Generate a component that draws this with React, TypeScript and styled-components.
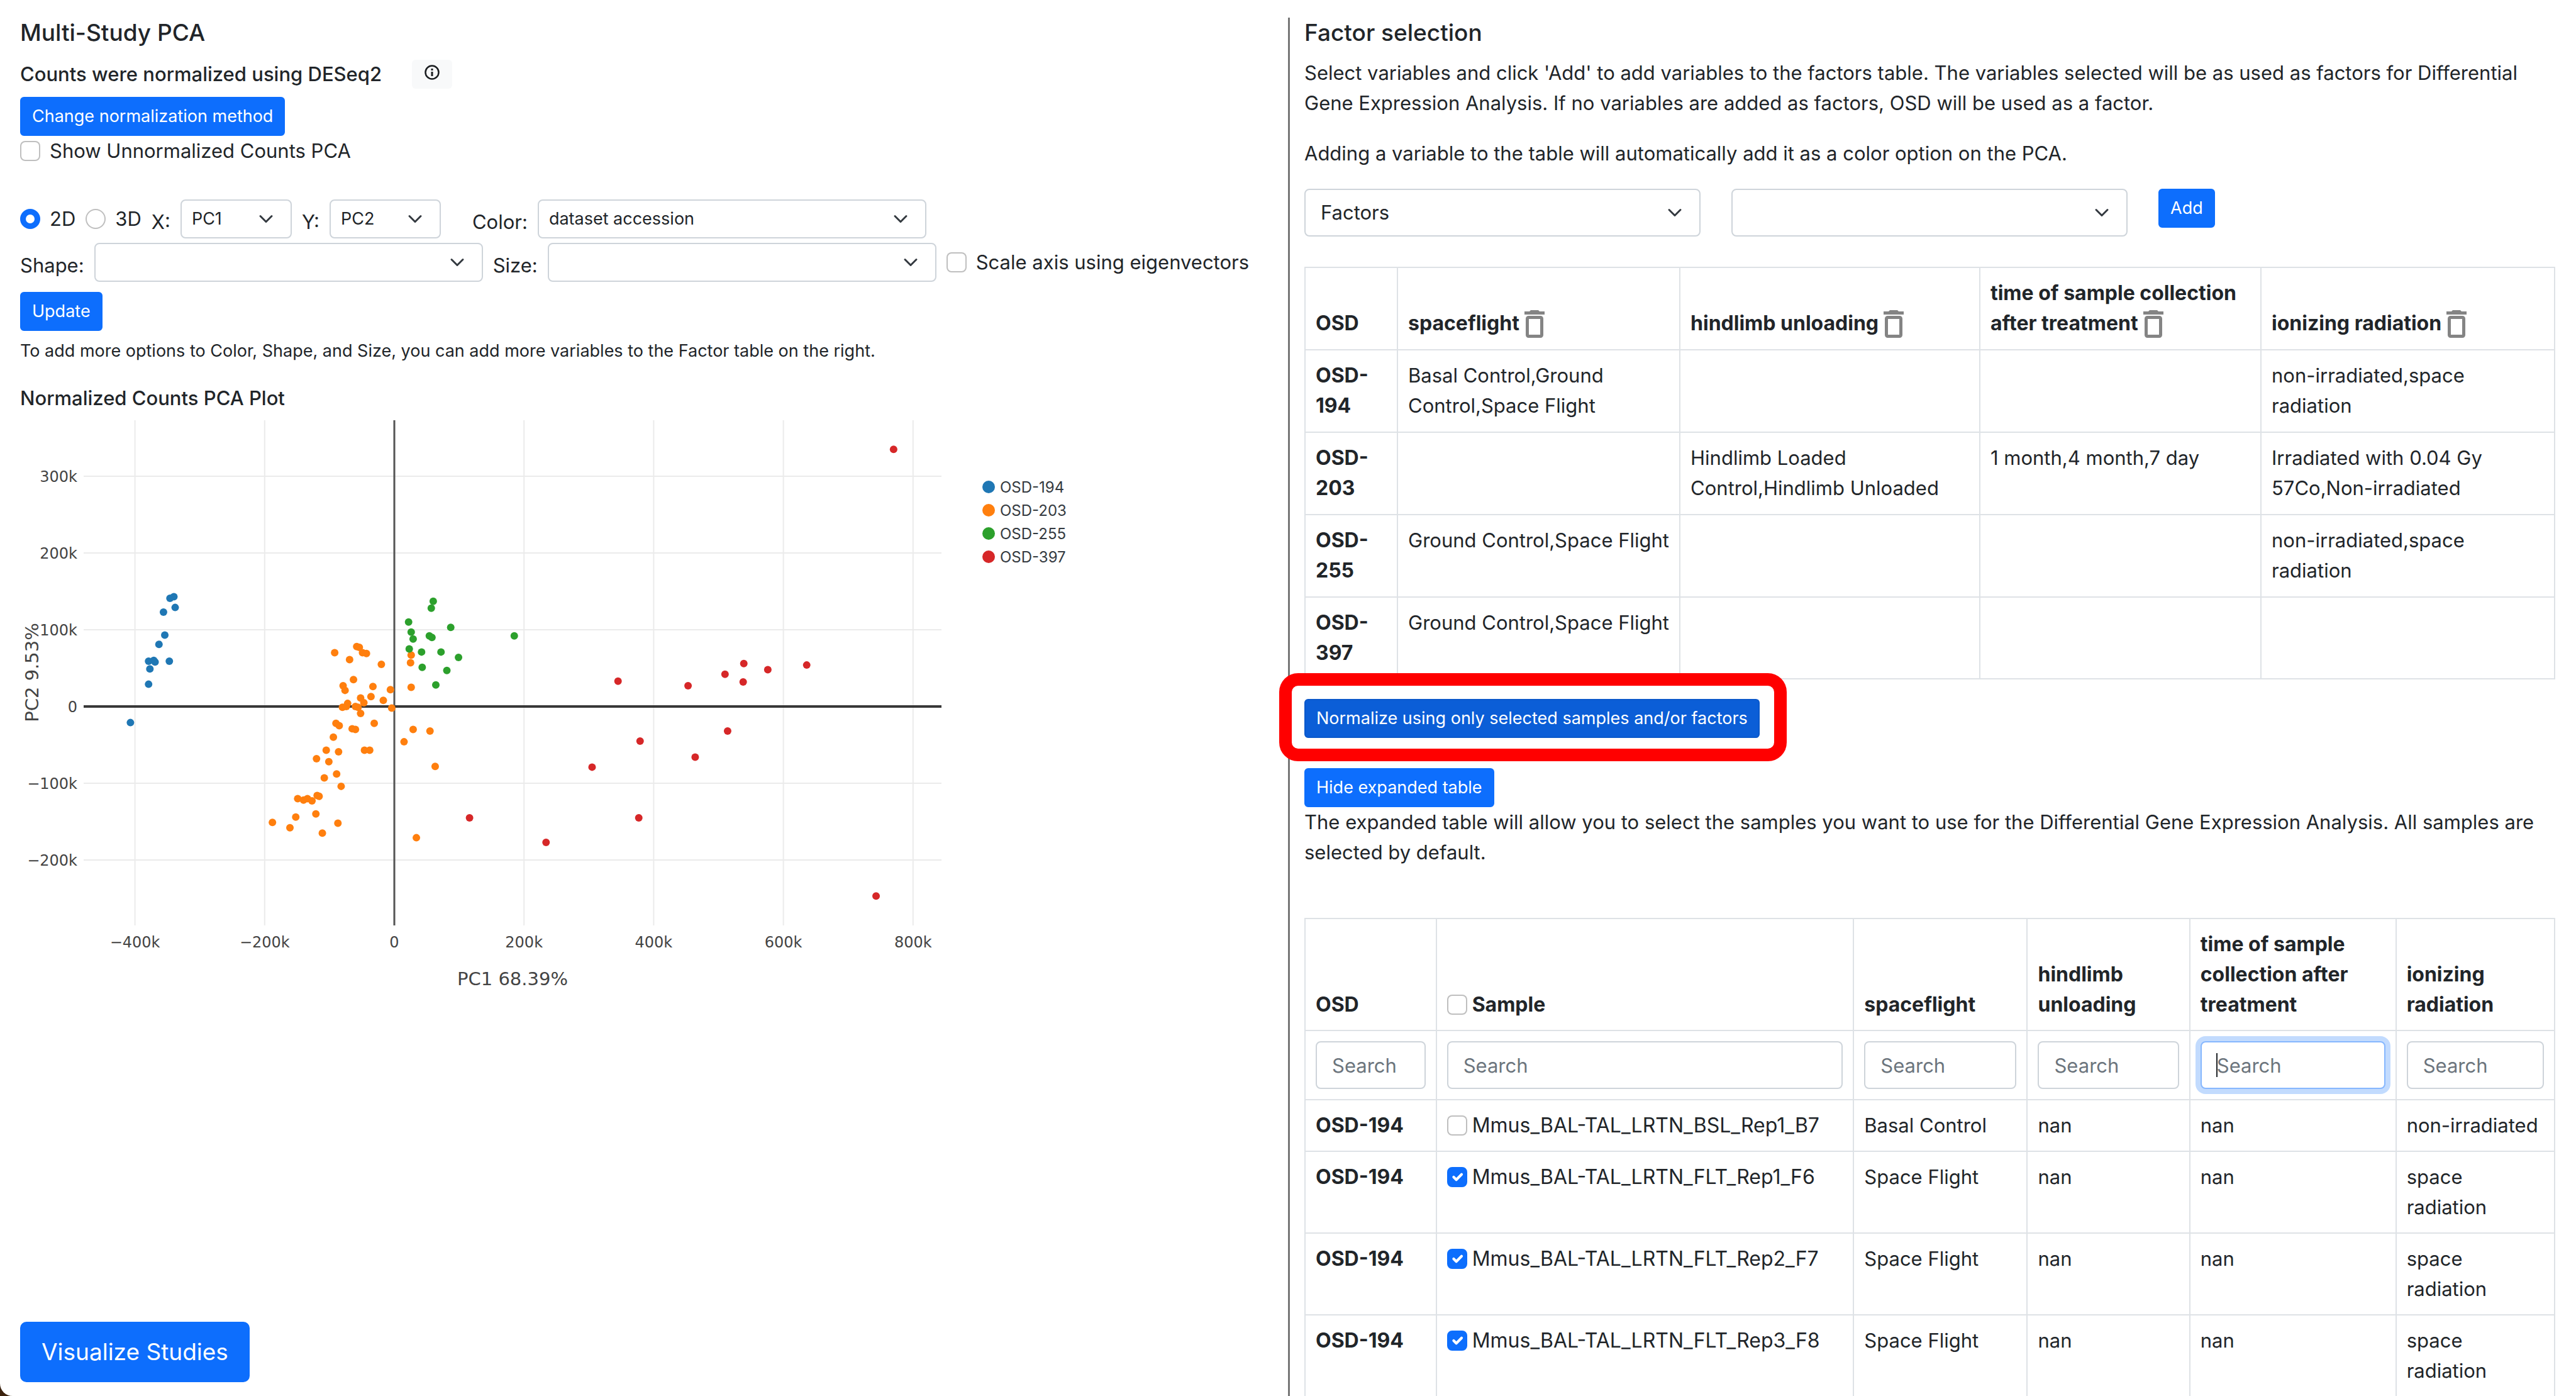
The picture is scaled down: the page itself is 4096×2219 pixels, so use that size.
import React from 'react';
import styled, { createGlobalStyle, css } from 'styled-components';

const SANS = 'Inter, "Liberation Sans", Arial, sans-serif';
const PLOT = '"DejaVu Sans", Verdana, sans-serif';

const CHECK_MARK =
  "url(\"data:image/svg+xml,%3csvg xmlns='http://www.w3.org/2000/svg' viewBox='0 0 20 20'%3e%3cpath fill='none' stroke='%23fff' stroke-linecap='round' stroke-linejoin='round' stroke-width='3' d='m6 10 3 3 6-6'/%3e%3c/svg%3e\")";
const RADIO_DOT =
  "url(\"data:image/svg+xml,%3csvg xmlns='http://www.w3.org/2000/svg' viewBox='-4 -4 8 8'%3e%3ccircle r='2' fill='%23fff'/%3e%3c/svg%3e\")";

const GlobalStyle = createGlobalStyle`
  *, *::before, *::after { box-sizing: border-box; }
  body {
    margin: 0;
    background: #3b220e;
    color: #212529;
    font-family: ${SANS};
    font-size: 31px;
    line-height: 48px;
  }
  button, input, select { font: inherit; color: inherit; margin: 0; }
`;

/* ---------- page frame ---------- */

const Page = styled.main`
  display: grid;
  grid-template-columns: minmax(0, 1fr) minmax(0, 1fr);
  height: 100vh;
  padding-top: 28px;
  overflow: hidden;
  background: #fff;
  border-bottom-left-radius: 20px;
`;

const PlotPanel = styled.section`
  display: flex;
  flex-direction: column;
  align-items: flex-start;
  min-height: 0;
  padding: 0 34px 22px 32px;
`;

const FactorPanel = styled.section`
  min-height: 0;
  padding: 0 33px 0 23px;
  border-left: 3px solid #777;
`;

const PanelTitle = styled.h1`
  margin: 0 0 16px;
  font-size: 37px;
  font-weight: 500;
  line-height: 48px;
`;

const Subtitle = styled.h2`
  margin: 0;
  font-size: 31px;
  font-weight: 500;
  line-height: 48px;
`;

const PlotTitle = styled(Subtitle)`
  margin-top: 30px;
`;

const Paragraph = styled.p<{ $after?: number }>`
  margin: 0 0 ${(p) => p.$after ?? 0}px;
`;

const Hint = styled.p`
  margin: 11px 0 0;
  font-size: 27px;
  line-height: 42px;
`;

/* ---------- controls ---------- */

const Button = styled.button<{ $active?: boolean }>`
  padding: 8px 17px;
  border: 2px solid ${(p) => (p.$active ? '#0a58ca' : '#0d6efd')};
  border-radius: 6px;
  background: ${(p) => (p.$active ? '#0b5ed7' : '#0d6efd')};
  color: #fff;
  font-size: 27px;
  line-height: 42px;
  cursor: pointer;
`;

const LargeButton = styled(Button)`
  margin-top: auto;
  padding: 16px 32px;
  border-radius: 10px;
  font-size: 37px;
  line-height: 60px;
`;

const InfoButton = styled.button`
  display: flex;
  justify-content: center;
  width: 64px;
  height: 46px;
  padding: 8px 0 0;
  border: 0;
  border-radius: 6px;
  background: #f8f9fa;
`;

const tick = css`
  flex: none;
  appearance: none;
  width: 32px;
  height: 32px;
  margin: 8px 0 0;
  border: 2px solid rgba(0, 0, 0, 0.25);
  background: #fff center / contain no-repeat;
  &:checked {
    border-color: #0d6efd;
    background-color: #0d6efd;
  }
`;

const Checkbox = styled.input.attrs({ type: 'checkbox' })`
  ${tick}
  border-radius: 8px;
  &:checked { background-image: ${CHECK_MARK}; }
`;

const Radio = styled.input.attrs({ type: 'radio' })`
  ${tick}
  border-radius: 50%;
  &:checked { background-image: ${RADIO_DOT}; }
`;

const Choice = styled.label`
  display: flex;
  align-items: flex-start;
  gap: 15px;
  white-space: nowrap;
`;

const SampleChoice = styled(Choice)`
  gap: 8px;
  font-size: 32px;
`;

const SubtitleRow = styled.div`
  display: flex;
  align-items: center;
  gap: 48px;
  margin: 2px 0 12px;
  height: 48px;
`;

const ControlRow = styled.div<{ $before: number }>`
  display: flex;
  align-items: center;
  gap: 16px;
  margin-top: ${(p) => p.$before}px;
  width: 100%;
`;

const FieldLabel = styled.label<{ $spaced?: boolean }>`
  padding-top: 10px;
  margin-left: ${(p) => (p.$spaced ? 34 : 0)}px;
`;

const SelectBox = styled.span<{ $width: number }>`
  position: relative;
  flex: 0 1 ${(p) => p.$width}px;
  min-width: 0;
`;

const NativeSelect = styled.select<{ $small?: boolean }>`
  display: block;
  appearance: none;
  width: 100%;
  height: ${(p) => (p.$small ? 62 : 76)}px;
  padding: 0 72px 0 ${(p) => (p.$small ? 16 : 24)}px;
  border: 2px solid #ced4da;
  border-radius: 8px;
  background: #fff;
  font-size: ${(p) => (p.$small ? 27 : 31)}px;
`;

const Chevron = styled.svg`
  position: absolute;
  top: 50%;
  right: 29px;
  width: 24px;
  height: 24px;
  margin-top: -12px;
  pointer-events: none;
`;

const FactorControls = styled.div`
  display: flex;
  align-items: flex-start;
  gap: 49px;
  margin-bottom: 48px;
`;

const HighlightedAction = styled.div`
  position: relative;
  width: fit-content;
  margin: 31px 0 48px;
  line-height: 0;
`;

const HighlightFrame = styled.span`
  position: absolute;
  inset: -41px -43px -37px -40px;
  border: 20px solid #f00;
  border-radius: 30px;
  pointer-events: none;
`;

const ButtonLine = styled.div`
  display: flex;
`;

function Select(p: { id?: string; label?: string; width: number; small?: boolean; value?: string }) {
  return (
    <SelectBox $width={p.width}>
      <NativeSelect id={p.id} aria-label={p.label} $small={p.small}>
        <option>{p.value ?? ''}</option>
      </NativeSelect>
      <Chevron viewBox="0 0 16 16" aria-hidden="true">
        <path d="m2 5 6 6 6-6" fill="none" stroke="#343a40" strokeWidth="2" strokeLinecap="round" strokeLinejoin="round" />
      </Chevron>
    </SelectBox>
  );
}

/* ---------- tables ---------- */

const Table = styled.table<{ $bottom: number }>`
  width: 100%;
  border-collapse: collapse;
  table-layout: fixed;
  th, td {
    padding: 16px 12px ${(p) => p.$bottom}px 16px;
    border: 2px solid #dee2e6;
    text-align: left;
    vertical-align: top;
  }
  th { font-size: 32px; font-weight: 700; }
  thead th { vertical-align: bottom; }
  tbody tr:last-child > * { padding-bottom: 16px; }
`;

const Col = styled.col<{ $share: number }>`
  width: ${(p) => p.$share}%;
`;

const FilterCell = styled.td`
  && { padding: 16px; }
`;

const FilterBox = styled.div`
  position: relative;
`;

const FilterInput = styled.input<{ $focused?: boolean }>`
  display: block;
  width: 100%;
  height: 76px;
  padding: 0 24px;
  border: 2px solid ${(p) => (p.$focused ? '#86b7fe' : '#ced4da')};
  border-radius: 8px;
  outline: 0;
  background: #fff;
  box-shadow: ${(p) => (p.$focused ? '0 0 0 8px rgba(13, 110, 253, 0.25)' : 'none')};
  &::placeholder { color: #6c757d; opacity: 1; }
`;

const Caret = styled.span`
  position: absolute;
  top: 19px;
  left: 25px;
  width: 2px;
  height: 38px;
  background: #212529;
`;

const TrashButton = styled.button`
  width: 32px;
  height: 44px;
  margin-left: 8px;
  padding: 0;
  border: 0;
  background: none;
  line-height: 0;
  vertical-align: -12px;
`;

function Trash({ name }: { name: string }) {
  return (
    <TrashButton aria-label={`Remove ${name}`}>
      <svg width="32" height="44" viewBox="0 0 32 44" aria-hidden="true">
        <path d="M8 2 10 0h12l2 2h8v5H0V2z" fill="#848484" />
        <rect x="4.500" y="11.500" width="23" height="30" rx="2" fill="none" stroke="#848484" strokeWidth="5" />
      </svg>
    </TrashButton>
  );
}

const FACTORS = ['spaceflight', 'hindlimb unloading', 'time of sample collection after treatment', 'ionizing radiation'];

const FACTOR_ROWS: [string, string[]][] = [
  ['OSD-194', ['Basal Control,Ground Control,Space Flight', '', '', 'non-irradiated,space radiation']],
  ['OSD-203', ['', 'Hindlimb Loaded Control,Hindlimb Unloaded', '1 month,4 month,7 day', 'Irradiated with 0.04 Gy 57Co,Non-irradiated']],
  ['OSD-255', ['Ground Control,Space Flight', '', '', 'non-irradiated,space radiation']],
  ['OSD-397', ['Ground Control,Space Flight', '', '', '']],
];

const SAMPLES = [
  { name: 'Mmus_BAL-TAL_LRTN_BSL_Rep1_B7', on: false, flight: 'Basal Control', radiation: 'non-irradiated' },
  { name: 'Mmus_BAL-TAL_LRTN_FLT_Rep1_F6', on: true, flight: 'Space Flight', radiation: 'space radiation' },
  { name: 'Mmus_BAL-TAL_LRTN_FLT_Rep2_F7', on: true, flight: 'Space Flight', radiation: 'space radiation' },
  { name: 'Mmus_BAL-TAL_LRTN_FLT_Rep3_F8', on: true, flight: 'Space Flight', radiation: 'space radiation' },
];

function FactorTable() {
  return (
    <Table $bottom={17}>
      <colgroup>
        {[7.4, 22.6, 24, 22.5, 23.5].map((w, i) => <Col key={i} $share={w} />)}
      </colgroup>
      <thead>
        <tr>
          <th scope="col">OSD</th>
          {FACTORS.map((f) => <th scope="col" key={f}>{f}<Trash name={f} /></th>)}
        </tr>
      </thead>
      <tbody>
        {FACTOR_ROWS.map(([osd, cells]) => (
          <tr key={osd}>
            <th scope="row">{osd}</th>
            {cells.map((c, i) => <td key={i}>{c}</td>)}
          </tr>
        ))}
      </tbody>
    </Table>
  );
}

function SampleTable() {
  const columns = ['OSD', 'Sample', ...FACTORS];
  return (
    <Table $bottom={16}>
      <colgroup>
        {[10.5, 33.4, 13.9, 13, 16.5, 12.7].map((w, i) => <Col key={i} $share={w} />)}
      </colgroup>
      <thead>
        <tr>
          {columns.map((c) => (
            <th scope="col" key={c}>
              {c === 'Sample' ? <SampleChoice><Checkbox />{c}</SampleChoice> : c}
            </th>
          ))}
        </tr>
        <tr>
          {columns.map((c, i) => (
            <FilterCell key={c}>
              <FilterBox>
                <FilterInput placeholder="Search" aria-label={`Search ${c}`} $focused={i === 4} />
                {i === 4 && <Caret />}
              </FilterBox>
            </FilterCell>
          ))}
        </tr>
      </thead>
      <tbody>
        {SAMPLES.map((s) => (
          <tr key={s.name}>
            <th scope="row">OSD-194</th>
            <td><SampleChoice><Checkbox defaultChecked={s.on} />{s.name}</SampleChoice></td>
            <td>{s.flight}</td>
            <td>nan</td>
            <td>nan</td>
            <td>{s.radiation}</td>
          </tr>
        ))}
      </tbody>
    </Table>
  );
}

/* ---------- PCA plot ---------- */

type Point = [number, number];

/* Coordinates of each sample, in thousands. */
const SERIES: { name: string; color: string; points: Point[] }[] = [
  {
    name: 'OSD-194', color: '#1f77b4',
    points: [[-407, -21], [-379, 29], [-377, 49], [-379, 59], [-371, 60], [-369, 58], [-347, 59], [-363, 81], [-354, 93], [-356, 123], [-346, 141], [-340, 143], [-338, 129]],
  },
  {
    name: 'OSD-203', color: '#ff7f0e',
    points: [[-92, 70], [-69, 61], [-58, 78], [-54, 77], [-49, 70], [-43, 69], [-20, 55], [-63, 35], [-79, 27], [-76, 21], [-33, 26], [-6, 22], [-36, 13], [-52, 11], [-47, 5], [-17, 8], [-72, 4], [-80, -1], [-74, 0], [-60, 0], [-56, -1], [-4, -2], [-52, -9], [-90, -22], [-85, -25], [-65, -29], [-60, -30], [-31, -22], [-94, -40], [-105, -57], [-86, -59], [-46, -57], [-38, -57], [-120, -68], [-101, -72], [-108, -93], [-89, -88], [-82, -104], [-149, -120], [-140, -122], [-134, -120], [-127, -123], [-119, -116], [-116, -117], [-121, -140], [-152, -144], [-188, -151], [-161, -158], [-111, -165], [-87, -152], [26, 67], [25, 57], [26, 25], [29, -30], [55, -32], [15, -46], [63, -78], [34, -171]],
  },
  {
    name: 'OSD-255', color: '#2ca02c',
    points: [[22, 110], [26, 97], [29, 88], [23, 75], [60, 137], [57, 128], [87, 103], [54, 92], [58, 90], [42, 71], [72, 71], [43, 51], [81, 47], [99, 64], [64, 28], [185, 92]],
  },
  {
    name: 'OSD-397', color: '#d62728',
    points: [[116, -145], [234, -177], [305, -79], [345, 33], [453, 27], [510, 42], [539, 56], [538, 32], [576, 48], [636, 54], [770, 335], [743, -247], [514, -32], [464, -66], [379, -45], [377, -145]],
  },
];

const AREA = { left: 101, right: 1465, top: 11, bottom: 814 };
const px = (v: number) => 595 + v * 1.031;
const py = (v: number) => 466 - v * 1.22;
const tickText = (v: number) => (v === 0 ? '0' : `${v < 0 ? '−' : ''}${Math.abs(v)}k`);

const Plot = styled.svg`
  display: block;
  width: 100%;
  .grid { stroke: #ebebeb; stroke-width: 2; }
  .tick { font: 24px ${PLOT}; fill: #444; }
  .title { font: 29px ${PLOT}; fill: #444; text-anchor: middle; }
  .legend { font: 24px ${SANS}; fill: #343a40; }
`;

function PcaPlot() {
  const xs = [-400, -200, 200, 400, 600, 800];
  const ys = [-200, -100, 100, 200, 300];
  return (
    <Plot viewBox="0 0 1982 930" role="img" aria-label="Normalized counts PCA scatter plot">
      {xs.map((v) => <line key={v} className="grid" x1={px(v)} x2={px(v)} y1={AREA.top} y2={AREA.bottom} />)}
      {ys.map((v) => <line key={v} className="grid" x1={AREA.left} x2={AREA.right} y1={py(v)} y2={py(v)} />)}
      <line x1={px(0)} x2={px(0)} y1={AREA.top} y2={AREA.bottom} stroke="#555" strokeWidth="3" />
      <line x1={AREA.left} x2={AREA.right} y1={py(0)} y2={py(0)} stroke="#383838" strokeWidth="4" />
      {SERIES.map((s) => s.points.map(([x, y], i) => (
        <circle key={s.name + i} cx={px(x)} cy={py(y)} r="6" fill={s.color} />
      )))}
      {[...xs, 0].map((v) => <text key={v} className="tick" x={px(v)} y="849" textAnchor="middle">{tickText(v)}</text>)}
      {[...ys, 0].map((v) => <text key={v} className="tick" x="91" y={py(v) + 9} textAnchor="end">{tickText(v)}</text>)}
      <text className="title" x="783" y="909">PC1 68.39%</text>
      <text className="title" transform="translate(29 412) rotate(-90)">PC2 9.53%</text>
      {SERIES.map((s, i) => (
        <g key={s.name}>
          <circle cx="1540" cy={117 + i * 37} r="10" fill={s.color} />
          <text className="legend" x="1558" y={126 + i * 37}>{s.name}</text>
        </g>
      ))}
    </Plot>
  );
}

/* ---------- page ---------- */

export default function App() {
  return (
    <>
      <GlobalStyle />
      <Page>
        <PlotPanel>
          <PanelTitle>Multi-Study PCA</PanelTitle>
          <SubtitleRow>
            <Subtitle>Counts were normalized using DESeq2</Subtitle>
            <InfoButton aria-label="About normalization">
              <svg width="24" height="24" viewBox="0 0 24 24" aria-hidden="true">
                <circle cx="12" cy="12" r="10.500" fill="none" stroke="#1a1d20" strokeWidth="2.500" />
                <path d="M12 6v3M12 11v7" stroke="#1a1d20" strokeWidth="3" />
              </svg>
            </InfoButton>
          </SubtitleRow>
          <Button>Change normalization method</Button>
          <Choice><Checkbox />Show Unnormalized Counts PCA</Choice>

          <ControlRow $before={53}>
            <Choice><Radio name="dims" defaultChecked />2D</Choice>
            <Choice><Radio name="dims" />3D</Choice>
            <FieldLabel htmlFor="x-axis">X:</FieldLabel>
            <Select id="x-axis" width={177} small value="PC1" />
            <FieldLabel htmlFor="y-axis">Y:</FieldLabel>
            <Select id="y-axis" width={177} small value="PC2" />
            <FieldLabel htmlFor="color" $spaced>Color:</FieldLabel>
            <Select id="color" width={618} small value="dataset accession" />
          </ControlRow>
          <ControlRow $before={7}>
            <FieldLabel htmlFor="shape">Shape:</FieldLabel>
            <Select id="shape" width={618} small />
            <FieldLabel htmlFor="size">Size:</FieldLabel>
            <Select id="size" width={618} small />
            <Choice><Checkbox />Scale axis using eigenvectors</Choice>
          </ControlRow>
          <ControlRow $before={16}>
            <Button>Update</Button>
          </ControlRow>
          <Hint>To add more options to Color, Shape, and Size, you can add more variables to the Factor table on the right.</Hint>

          <PlotTitle>Normalized Counts PCA Plot</PlotTitle>
          <PcaPlot />
          <LargeButton>Visualize Studies</LargeButton>
        </PlotPanel>

        <FactorPanel>
          <PanelTitle as="h2">Factor selection</PanelTitle>
          <Paragraph $after={32}>
            Select variables and click 'Add' to add variables to the factors table. The variables selected will be as used as
            factors for Differential Gene Expression Analysis. If no variables are added as factors, OSD will be used as a factor.
          </Paragraph>
          <Paragraph $after={32}>Adding a variable to the table will automatically add it as a color option on the PCA.</Paragraph>
          <FactorControls>
            <Select label="Variable type" width={630} value="Factors" />
            <Select label="Variable" width={630} />
            <Button>Add</Button>
          </FactorControls>
          <FactorTable />
          <HighlightedAction>
            <Button $active>Normalize using only selected samples and/or factors</Button>
            <HighlightFrame />
          </HighlightedAction>
          <ButtonLine><Button>Hide expanded table</Button></ButtonLine>
          <Paragraph $after={80}>
            The expanded table will allow you to select the samples you want to use for the Differential Gene Expression
            Analysis. All samples are selected by default.
          </Paragraph>
          <SampleTable />
        </FactorPanel>
      </Page>
    </>
  );
}
